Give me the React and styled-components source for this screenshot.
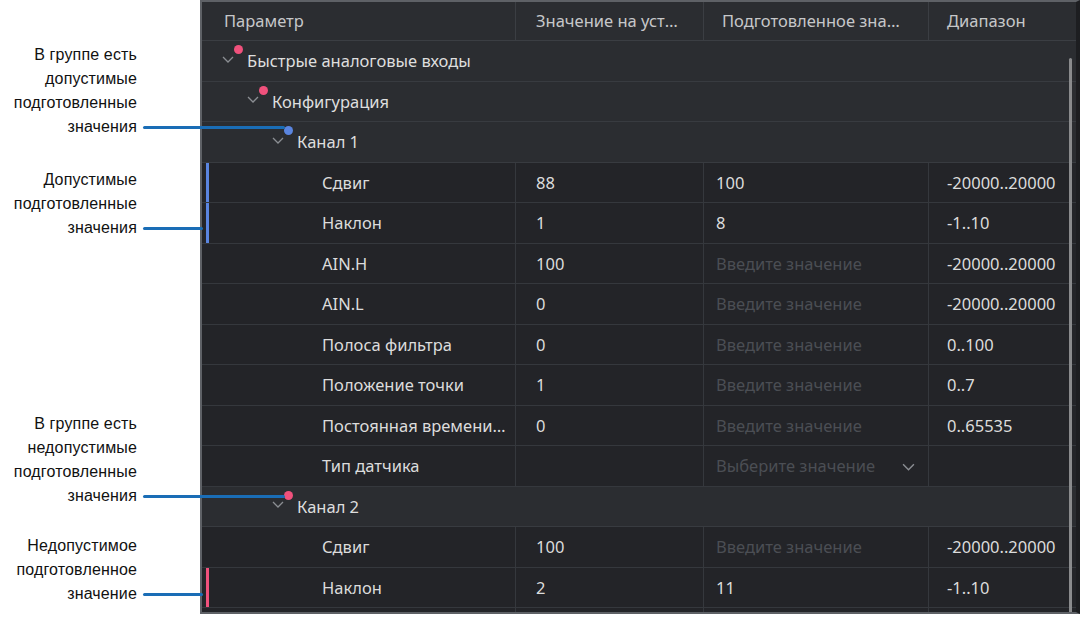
import React from 'react'
import styled, { createGlobalStyle } from 'styled-components'

const GlobalStyle = createGlobalStyle`
    html, body {
        margin: 0;
        padding: 0;
        background: #ffffff;
    }
    body {
        font-family: "Noto Sans", "Open Sans", sans-serif;
    }
`

const rows = [
    { kind: 'group', level: 0, name: 'Быстрые аналоговые входы', dot: 'bad' },
    { kind: 'group', level: 1, name: 'Конфигурация', dot: 'bad' },
    { kind: 'group', level: 2, name: 'Канал 1', dot: 'ok' },
    { kind: 'leaf', name: 'Сдвиг', device: '88', prepared: '100', range: '-20000..20000', mark: 'ok' },
    { kind: 'leaf', name: 'Наклон', device: '1', prepared: '8', range: '-1..10', mark: 'ok' },
    { kind: 'leaf', name: 'AIN.H', device: '100', range: '-20000..20000' },
    { kind: 'leaf', name: 'AIN.L', device: '0', range: '-20000..20000' },
    { kind: 'leaf', name: 'Полоса фильтра', device: '0', range: '0..100' },
    { kind: 'leaf', name: 'Положение точки', device: '1', range: '0..7' },
    { kind: 'leaf', name: 'Постоянная времени фильтра', device: '0', range: '0..65535' },
    { kind: 'leaf', name: 'Тип датчика', device: '', select: true, range: '' },
    { kind: 'group', level: 2, name: 'Канал 2', dot: 'bad' },
    { kind: 'leaf', name: 'Сдвиг', device: '100', range: '-20000..20000' },
    { kind: 'leaf', name: 'Наклон', device: '2', prepared: '11', range: '-1..10', mark: 'bad' },
    { kind: 'leaf', name: 'AIN.H', device: '100', range: '-20000..20000' },
]

// подписи слева, линия тянется к точке или к полосе в таблице
const notes = [
    { top: 43, lines: ['В группе есть', 'допустимые', 'подготовленные', 'значения'], reach: 142 },
    { top: 168, lines: ['Допустимые', 'подготовленные', 'значения'], reach: 60 },
    { top: 412, lines: ['В группе есть', 'недопустимые', 'подготовленные', 'значения'], reach: 142 },
    { top: 534, lines: ['Недопустимое', 'подготовленное', 'значение'], reach: 60 },
]

const colors = {
    ok: '#5a85e0',
    bad: '#f0517c',
}

const Chevron = ({ size = 12 }) => (
    <svg width={size} height={Math.round(size / 2) + 1} viewBox="0 0 12 7" fill="none">
        <path d="M1 1 L6 6 L11 1" stroke="#8b8e93" strokeWidth="1.3" />
    </svg>
)

const App = () => {
    return (
        <Page>
            <GlobalStyle />
            {notes.map((n, i) => (
                <Callout key={i} $top={n.top}>
                    <NoteText>
                        {n.lines.map((l, j) => <div key={j}>{l}</div>)}
                    </NoteText>
                    <Leader $reach={n.reach} />
                </Callout>
            ))}
            <Panel>
                <Header>
                    <HeadCell $pad={22}>Параметр</HeadCell>
                    <HeadCell $pad={20}>Значение на устройстве</HeadCell>
                    <HeadCell $pad={18}>Подготовленное значение</HeadCell>
                    <HeadCell $pad={18} $last>Диапазон</HeadCell>
                </Header>
                {rows.map((r, i) => r.kind === 'group' ? (
                    <GroupRow key={i} $level={r.level}>
                        <Chevron />
                        {r.dot && <Dot $color={colors[r.dot]} $level={r.level} />}
                        <span>{r.name}</span>
                    </GroupRow>
                ) : (
                    <LeafRow key={i}>
                        {r.mark && <Mark $color={colors[r.mark]} />}
                        <NameCell>{r.name}</NameCell>
                        <Cell $pad={20}>{r.device}</Cell>
                        <Cell $pad={12}>
                            {r.prepared ? r.prepared : r.select ? (
                                <SelectBox>
                                    <Placeholder>Выберите значение</Placeholder>
                                    <Chevron size={13} />
                                </SelectBox>
                            ) : <Placeholder>Введите значение</Placeholder>}
                        </Cell>
                        <Cell $pad={18} $last>{r.range}</Cell>
                    </LeafRow>
                ))}
                <Thumb />
            </Panel>
        </Page>
    )
}

export default App

const Page = styled.div`
    position: relative;
    width: 1082px;
    height: 617px;
    overflow: hidden;
    padding-left: 200px;
    box-sizing: border-box;
`

const Callout = styled.div`
    position: absolute;
    left: 0;
    top: ${props => props.$top}px;
    display: flex;
    align-items: flex-end;
    z-index: 5;
`

const NoteText = styled.div`
    width: 137px;
    text-align: right;
    font-family: "Liberation Sans", Arial, sans-serif;
    font-size: 16px;
    line-height: 24px;
    color: #111111;
    letter-spacing: 0.15px;
    white-space: nowrap;
    display: flex;
    flex-direction: column;
    align-items: flex-end;
`

const Leader = styled.div`
    width: ${props => props.$reach}px;
    height: 3px;
    margin-left: 6px;
    margin-bottom: 10px;
    border-radius: 2px;
    background-color: #1a6db6;
`

const Panel = styled.div`
    position: relative;
    width: 880px;
    height: 614px;
    box-sizing: border-box;
    border: 2px solid #5e6166;
    border-right: 4px solid #1d1e21;
    background-color: #232428;
    overflow: hidden;
    font-size: 16.5px;
    color: #dcdcdc;
`

const gridCols = '314px 188px 225px 1fr'

const Header = styled.div`
    display: grid;
    grid-template-columns: ${gridCols};
    height: 38px;
    background-color: #2b2d31;
    border-bottom: 1px solid #3b3e43;
`

const HeadCell = styled.div`
    display: block;
    line-height: 38px;
    padding-left: ${props => props.$pad}px;
    padding-right: 20px;
    color: #c6c7c9;
    white-space: nowrap;
    overflow: hidden;
    text-overflow: ellipsis;
    border-right: ${props => props.$last ? 'none' : '1px solid #3b3e43'};
    min-width: 0;
`

const GroupRow = styled.div`
    position: relative;
    height: 39.5px;
    background-color: #2b2d31;
    border-bottom: 1px solid #383b40;
    display: flex;
    align-items: center;
    gap: 13px;
    padding-left: ${props => 20 + props.$level * 25}px;
    color: #dedede;
    svg {
        margin-top: -3px;
    }
`

const Dot = styled.span`
    position: absolute;
    left: ${props => 32 + props.$level * 25}px;
    top: 4px;
    width: 9px;
    height: 9px;
    border-radius: 50%;
    background-color: ${props => props.$color};
`

const LeafRow = styled.div`
    position: relative;
    display: grid;
    grid-template-columns: ${gridCols};
    height: 39.5px;
    border-bottom: 1px solid #35383d;
    background-color: #232428;
`

const Mark = styled.span`
    position: absolute;
    left: 4px;
    top: 0;
    bottom: 0;
    width: 3px;
    background-color: ${props => props.$color};
`

const Cell = styled.div`
    display: flex;
    align-items: center;
    padding-left: ${props => props.$pad}px;
    padding-right: 8px;
    white-space: nowrap;
    min-width: 0;
    overflow: hidden;
    border-right: ${props => props.$last ? 'none' : '1px solid #35383d'};
`

const NameCell = styled(Cell)`
    display: block;
    line-height: 39.5px;
    padding-left: 120px;
    padding-right: 6px;
    text-overflow: ellipsis;
`

const Placeholder = styled.span`
    color: #4b4e54;
`

const SelectBox = styled.div`
    display: flex;
    align-items: center;
    justify-content: space-between;
    width: 199px;
    svg {
        margin-top: 2px;
    }
`

const Thumb = styled.div`
    position: absolute;
    right: 4px;
    top: 56px;
    bottom: 0;
    width: 3px;
    border-radius: 2px 2px 0 0;
    background-color: #8a8b8d;
`
